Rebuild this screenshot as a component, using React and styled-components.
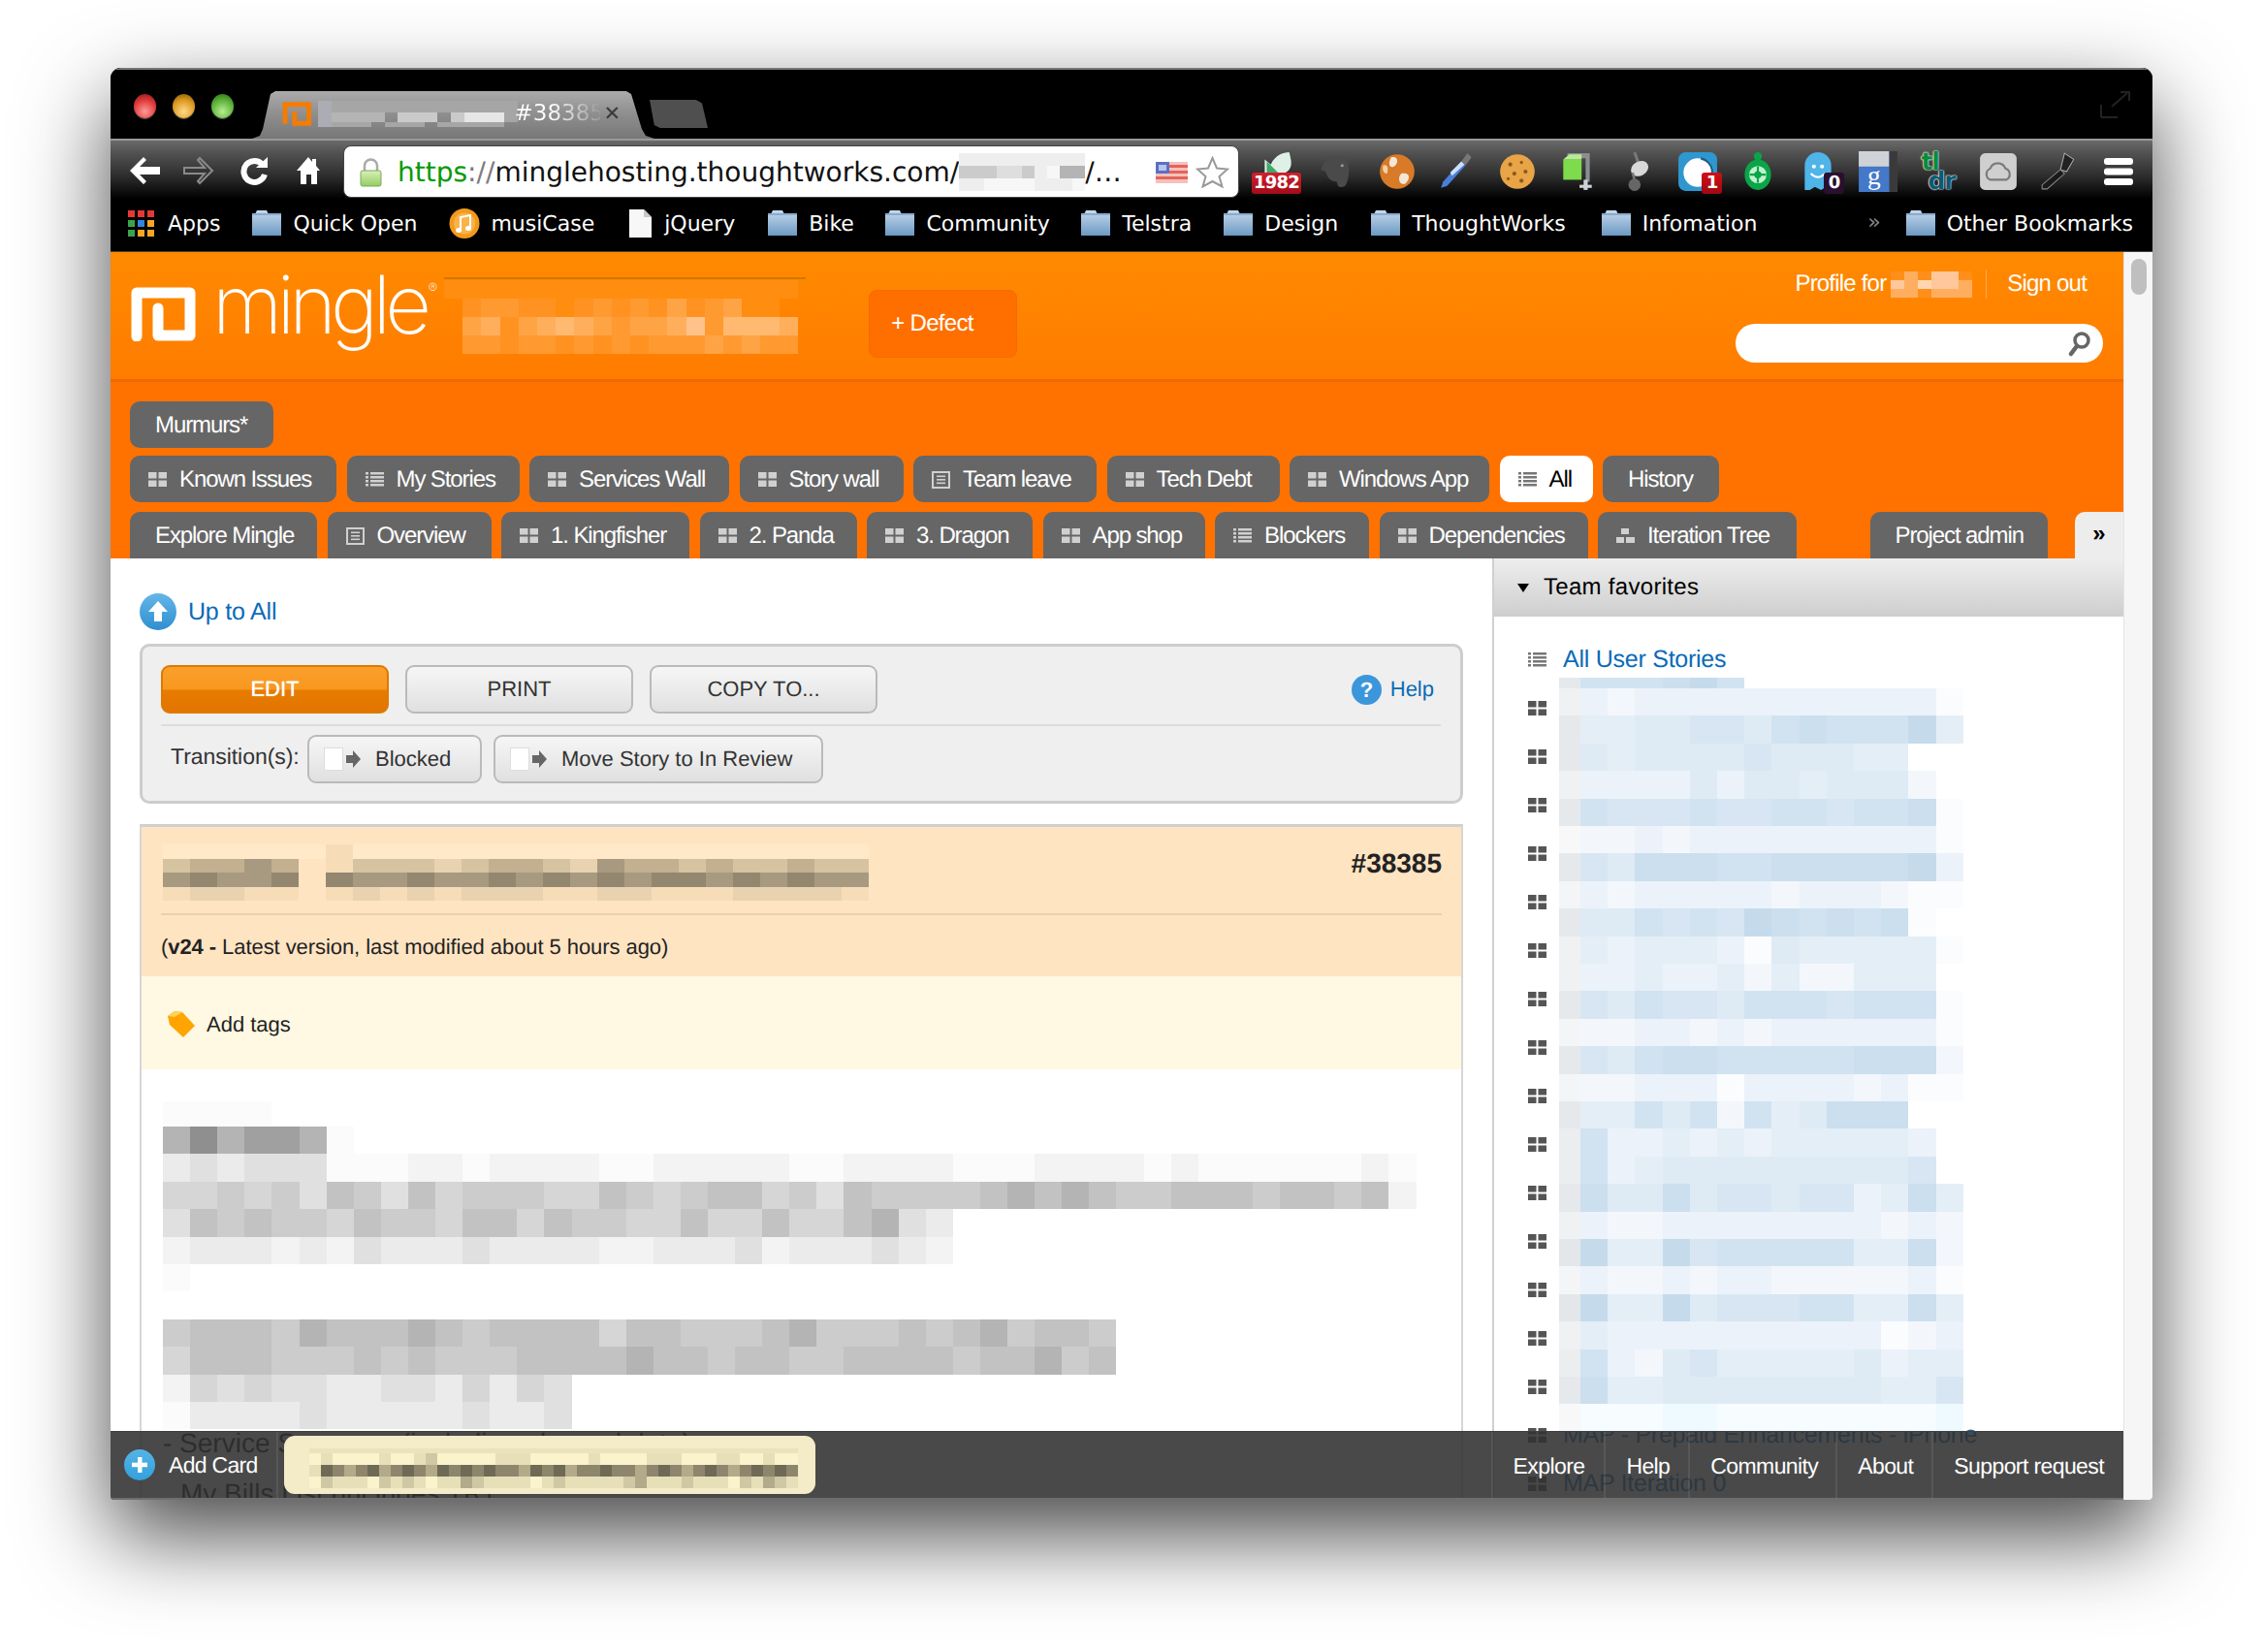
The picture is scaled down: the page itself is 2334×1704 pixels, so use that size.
import React from "react";
import styled, { createGlobalStyle } from "styled-components";

const Global = createGlobalStyle`
  html, body { margin: 0; padding: 0; background: #fff; }
  body { width: 2334px; height: 1704px; overflow: hidden; font-family: "Liberation Sans", Arial, sans-serif; text-rendering: geometricPrecision; }
`;

const Desk = styled.div`
  width: 2334px; height: 1704px; padding: 70px 114px 0 114px; box-sizing: border-box; background: #fff;
`;
const Win = styled.div`
  width: 2106px; height: 1477px; display: flex; flex-direction: column; background: #000;
  border-radius: 11px 11px 4px 4px; overflow: hidden;
  box-shadow: 0 36px 90px rgba(0,0,0,.72);
`;
const Strip = styled.div`
  height: 73px; flex: none; box-sizing: border-box; position: relative; display: flex; align-items: flex-end;
  padding: 0 22px 0 146px; background: #000; border-top: 2px solid #777; 
`;
const Lights = styled.div`
  position: absolute; left: 24px; top: 25px; display: flex; gap: 17px;
`;
const Light = styled.span`
  width: 23px; height: 25px; border-radius: 50%; display: block;
  background: radial-gradient(circle at 50% 72%, ${p => p.$hi} 0%, ${p => p.$c} 55%, ${p => p.$lo} 100%);
  box-shadow: 0 1px 1px rgba(255,255,255,.3);
`;
const Tab = styled.div`
  width: 415px; height: 49px; flex: none; box-sizing: border-box; position: relative; display: flex; align-items: center;
  padding: 0 0 3px 31px; gap: 6px; font: 23px "DejaVu Sans", sans-serif; color: #fff;
  background: linear-gradient(#ababab, #909090 45%, #777);
  clip-path: polygon(0 100%, 8px 94%, 11px 80%, 19px 6%, 24px 0, 386px 0, 391px 6%, 402px 80%, 406px 94%, 415px 100%);
`;
const TabNum = styled.span`
  width: 88px; margin-left: -9px; overflow: hidden; white-space: nowrap;
  background: linear-gradient(90deg, #fff 40%, #999 100%);
  -webkit-background-clip: text; background-clip: text; color: transparent;
`;
const TabClose = styled.span`
  color: #3a3a3a; font-size: 21px; margin-left: -2px;
`;
const NewTab = styled.div`
  width: 60px; height: 29px; margin: 0 0 11px -5px; background: #4f4f4f;
  clip-path: polygon(0 0, 80% 0, 90% 12%, 100% 100%, 18% 100%, 8% 90%);
`;
const FullIcon = styled.div`
  margin-left: auto; align-self: center; line-height: 0;
`;
const Toolbar = styled.div`
  height: 62px; flex: none; box-sizing: border-box; display: flex; align-items: center;
  background: linear-gradient(#6a6a6a 0, #555 18%, #2c2c2c 62%, #000 100%); border-top: 2px solid #999;
`;
const NavGroup = styled.div`
  width: 240px; flex: none; display: flex; align-items: center; padding-left: 19px; box-sizing: border-box; margin-top: 2px;
`;
const NavBtn = styled.span`
  display: block; line-height: 0; margin-left: ${p => p.$ml ?? 0}px;
`;
const Url = styled.div`
  width: 924px; height: 54px; margin-top: 3px; flex: none; box-sizing: border-box; background: #fff; border: 1px solid #444; border-radius: 8px;
  display: flex; align-items: center; padding: 2px 0 0 16px; font: 28px "DejaVu Sans", sans-serif; color: #111; white-space: nowrap;
`;
const Lock = styled.span`
  line-height: 0; margin-right: 16px; flex: none;
`;
const UrlG = styled.span` color: #089a08; `;
const UrlS = styled.span` color: #7c7c7c; `;
const UrlEnd = styled.span`
  margin-left: auto; display: flex; align-items: center; gap: 8px; padding-right: 9px; line-height: 0;
`;
const Exts = styled.div`
  display: flex; margin-left: 8px; align-items: center; margin-top: 3px;
`;
const Ext = styled.div`
  width: 62px; height: 44px; position: relative; display: flex; align-items: center; justify-content: center; line-height: 0;
`;
const Badge = styled.span`
  position: absolute; top: 23px; left: ${p => p.$l}px; height: 22px; min-width: 21px; padding: 0 2px; box-sizing: border-box; border-radius: 3px;
  background: ${p => p.$bg}; color: #fff; font: bold 18px/22px "DejaVu Sans", sans-serif; text-align: center; letter-spacing: -.8px;
`;
const TldrText = styled.span`
  display: flex; flex-direction: column; font: bold 25px/20px "DejaVu Sans", sans-serif; letter-spacing: -1px;
  text-shadow: 0 0 1px #fff, 0 0 1px #fff, 0 0 2px #fff;
`;
const TlA = styled.span` color: #0a8a3a; `;
const TlB = styled.span` color: #0c5a72; margin-left: 7px; `;
const Bookmarks = styled.div`
  height: 55px; flex: none; box-sizing: border-box; display: flex; align-items: center; padding: 0 0 4px 18px;
  background: #000; font: 22px "DejaVu Sans", sans-serif; color: #fff; border-bottom: 1px solid #444; white-space: nowrap;
`;
const Mark = styled.span`
  display: flex; align-items: center; gap: ${p => p.$gap ?? 11}px; margin-right: ${p => p.$mr ?? 33}px; line-height: 0;
`;
const MarkText = styled.span` line-height: 26px; margin-top: 3px; `;
const More = styled.span`
  margin-left: auto; margin-right: 25px; color: #888; font-size: 22px; line-height: 26px;
`;
const Page = styled.div`
  flex: 1; min-height: 0; display: flex; position: relative; background: #fff; overflow: hidden;
`;
const PageMain = styled.div`
  width: 2076px; flex: none; display: flex; flex-direction: column; min-height: 0;
`;
const Scroll = styled.div`
  width: 30px; flex: none; background: #f6f6f6; border-left: 1px solid #e4e4e4; box-sizing: border-box; padding: 7px 0 0 7px;
`;
const Thumb = styled.div`
  width: 16px; height: 37px; border-radius: 8px; background: #bfbfbf;
`;
const Header = styled.div`
  height: 134px; flex: none; box-sizing: border-box; display: flex; position: relative;
  padding: 36px 21px 0 21px; background: linear-gradient(#ff8a00, #ff7c00);
  border-bottom: 3px solid #ec6a00;
`;
const Logo = styled.div`
  display: flex; align-items: flex-start; width: 331px; flex: none;
`;
const LogoMark = styled.span` line-height: 0; `;
const LogoWord = styled.span`
  color: #fff; font: 250 83px/74px "Inter", sans-serif; letter-spacing: -5.8px; margin: -18px 0 0 16px; position: relative;
`;
const LogoR = styled.span`
  position: absolute; right: -12px; top: 13px; font-size: 14px; line-height: 14px; letter-spacing: 0;
`;
const Project = styled.div`
  width: 430px; flex: none; margin: -10px 0 0 0; line-height: 0;
`;
const ProjectShift = styled.div`
  margin-left: -8px;
`;
const ProjectLine = styled.div`
  width: 373px; height: 2px; background: #d27600; margin-bottom: 1px;
`;
const Defect = styled.button`
  width: 153px; height: 70px; margin: 3px 0 0 0; border: 1px solid #f76a00; border-radius: 8px; background: #ff6f00; color: #fff;
  font: 24px "Liberation Sans", sans-serif; letter-spacing: -.7px; padding: 0 22px 0 0; text-rendering: geometricPrecision;
`;
const HeadRight = styled.div`
  margin-left: auto; display: flex; flex-direction: column; align-items: flex-end; margin-top: -18px;
`;
const ProfileRow = styled.div`
  display: flex; align-items: center; color: #fff; font: 24px "Liberation Sans", sans-serif; letter-spacing: -.8px; height: 30px; padding-right: 17px;
`;
const ProfileMos = styled.span` margin: 0 0 0 5px; line-height: 0; `;
const ProfileSep = styled.span`
  width: 1px; height: 30px; background: rgba(255,255,255,.3); margin: 0 21px 0 14px;
`;
const Search = styled.div`
  width: 379px; height: 40px; margin-top: 26px; background: #fff; border-radius: 20px; display: flex; align-items: center; justify-content: flex-end; padding-right: 12px; box-sizing: border-box; line-height: 0;
`;
const Nav = styled.div`
  flex: none; height: 182px; box-sizing: border-box; padding: 20px 0 0 20px; background: #ff7200; display: flex; flex-direction: column; position: relative;
`;
const TabRow = styled.div`
  display: flex; margin-top: ${p => p.$mt ?? 0}px; gap: 10.5px;
`;
const NavTab = styled.a`
  height: 48px; flex: none; box-sizing: border-box; width: ${p => p.$w}px; padding: 1px 0 0 ${p => p.$icon ? 19 : 26}px; display: flex; align-items: center; gap: 13px;
  background: ${p => p.$on ? "#fff" : "#666"}; color: ${p => p.$on ? "#000" : "#fff"};
  border-radius: ${p => p.$flat ? "10px 10px 0 0" : "10px"};
  margin-left: ${p => p.$ml ?? 0}px;
  font: 24px "Liberation Sans", sans-serif; letter-spacing: -1.1px; white-space: nowrap;
`;
const MoreTab = styled.div`
  position: absolute; right: 0; bottom: 0; width: 50px; height: 48px; background: #ededed; border-radius: 10px 0 0 0; color: #000;
  display: flex; align-items: center; justify-content: center; font: bold 24px "Liberation Sans", sans-serif; padding-bottom: 2px; box-sizing: border-box;
`;
const Body = styled.div`
  flex: 1; min-height: 0; display: flex; overflow: hidden;
`;
const MainCol = styled.div`
  width: 1427px; flex: none; box-sizing: border-box; border-right: 2px solid #d0d0d0; padding: 36px 30px 0 30px; color: #222;
`;
const UpLink = styled.a`
  display: flex; align-items: center; gap: 12px; height: 38px; color: #0a6ab8; font-size: 25px; letter-spacing: -.2px; line-height: 0;
`;
const Box = styled.div`
  margin-top: 14px; height: 165px; box-sizing: border-box; background: #efefef; border: 3px solid #cdcdcd; border-radius: 10px; padding: 19px 20px 0 19px;
`;
const BtnRow = styled.div`
  display: flex; gap: 17px; align-items: center; height: 50px; 
`;
const Act = styled.button`
  width: 235px; height: 50px; box-sizing: border-box; border-radius: 9px; font: 22px "Liberation Sans", sans-serif; padding: 0; text-rendering: geometricPrecision;
  color: ${p => p.$primary ? "#fff" : "#333"};
  text-shadow: ${p => p.$primary ? "0 0 1px #fff" : "none"};
  border: 2px solid ${p => p.$primary ? "#dd7a00" : "#bababa"};
  background: ${p => p.$primary ? "linear-gradient(#fb9f2b 0, #f89820 50%, #e87b00 52%, #e27500 100%)" : "linear-gradient(#f6f6f6, #e0e0e0)"};
`;
const Help = styled.a`
  margin-left: auto; display: flex; align-items: center; gap: 9px; color: #0a6ab8; font-size: 22px; line-height: 0; padding-right: 7px;
`;
const Rule = styled.div`
  height: 2px; background: #dcdcdc; margin-top: 11px; 
`;
const TransRow = styled.div`
  display: flex; align-items: center; height: 50px; margin-top: 9px;
`;
const TransLabel = styled.span`
  font-size: 23px; color: #333; margin: -5px 12px 0 10px; letter-spacing: -.05px; width: 129px; white-space: nowrap;
`;
const Trans = styled.button`
  width: ${p => p.$w}px; height: 50px; margin-right: 12px; box-sizing: border-box; border: 2px solid #bababa; border-radius: 9px; background: linear-gradient(#f6f6f6, #e0e0e0);
  font: 22px "Liberation Sans", sans-serif; color: #333; display: flex; align-items: center; gap: 15px; padding: 0 0 0 15px; text-rendering: geometricPrecision;
`;
const TransIcon = styled.span` line-height: 0; `;
const Card = styled.div`
  margin-top: 21px; border-left: 2px solid #d6d6d6; border-right: 2px solid #d6d6d6; border-top: 3px solid #d0d0d0; height: 800px;
`;
const CardHead = styled.div`
  background: #ffe4c2; height: 154px; box-sizing: border-box; padding: 18px 20px 0 20px; color: #222;
`;
const TitleRow = styled.div`
  display: flex; justify-content: space-between; align-items: flex-start; height: 71px; line-height: 0; padding-left: 2px;
`;
const CardNum = styled.span`
  font: bold 28px/38px "Liberation Sans", sans-serif; color: #222; margin-top: 1px;
`;
const HeadRule = styled.div` height: 2px; background: #eccfae; `;
const Version = styled.div` font-size: 22px; padding-top: 20px; line-height: 26px; letter-spacing: -.07px; `;
const TagBar = styled.div`
  background: #fff8e2; height: 96px; box-sizing: border-box; display: flex; align-items: center; padding: 3px 0 0 26px; gap: 11px; font-size: 22px; line-height: 0;
`;
const CardBody = styled.div`
  padding: 33px 0 0 22px; color: #111; line-height: 0;
`;
const Line = styled.div`
  font-size: 28px; line-height: 28px; color: #111; margin-left: ${p => p.$ml ?? 0}px; margin-top: ${p => p.$mt ?? 0}px; white-space: nowrap;
`;
const Side = styled.div`
  flex: 1; min-width: 0;
`;
const SideHead = styled.div`
  height: 60px; display: flex; align-items: center; gap: 15px; padding-left: 24px; box-sizing: border-box; font-size: 24px; letter-spacing: .3px; color: #000;
  background: linear-gradient(#eeeeee, #cecece);
`;
const Tri = styled.span`
  width: 0; height: 0; border-left: 6.5px solid transparent; border-right: 6.5px solid transparent; border-top: 9px solid #000; display: block;
`;
const SideList = styled.div`
  position: relative; padding: 19px 0 0 35px; 
`;
const SideRow = styled.div`
  height: 50px; display: flex; align-items: center; gap: 17px; color: #0a6ab8; font-size: 25px; letter-spacing: -.25px; white-space: nowrap; line-height: 0;
`;
const SideText = styled.span` line-height: 30px; `;
const SideMos = styled.div`
  position: absolute; left: 67px; top: 63px; line-height: 0;
`;
const Bar = styled.div`
  position: absolute; left: 0; right: 30px; bottom: 0; height: 71px; background: rgba(50,50,50,.887); border-top: 1px solid #3e3e3e; border-bottom: 2px solid #6e6e6e;
  box-sizing: border-box; display: flex; align-items: center; color: #fff; font: 23px "Liberation Sans", sans-serif; letter-spacing: -.7px;
`;
const AddCard = styled.a`
  width: 173px; height: 100%; flex: none; display: flex; align-items: center; gap: 14px; box-sizing: border-box; padding-left: 14px; border-right: 2px solid rgba(255,255,255,.08); line-height: 0;
`;
const AddText = styled.span` line-height: 26px; white-space: nowrap; `;
const Bubble = styled.div`
  margin-left: 6px; width: 548px; height: 60px; box-sizing: border-box; border-radius: 11px; background: #f4ebc8; padding: 13px 0 0 26px; line-height: 0;
`;
const FootLinks = styled.nav`
  margin-left: auto; height: 100%; display: flex; letter-spacing: -.6px;
`;
const FootLink = styled.a`
  height: 100%; box-sizing: border-box; display: flex; align-items: center; padding: 2px ${p => p.$r ?? 20}px 0 21px; border-left: 2px solid rgba(255,255,255,.08);
`;
const MosSvg = styled.svg`
  display: inline-block; flex: none; shape-rendering: crispEdges;
`;

function Mosaic({ rows, pal, w, h, firstW, heights }) {
  const fw = firstW ?? w;
  const hs = rows.map((_, j) => (heights && heights[j] != null ? heights[j] : h));
  const maxLen = Math.max(...rows.map(r => r.length));
  const W = fw + (maxLen - 1) * w;
  const H = hs.reduce((a, b) => a + b, 0);
  let y = 0;
  return (
    <MosSvg width={W} height={H} viewBox={`0 0 ${W} ${H}`}>
      {rows.map((r, j) => {
        const yy = y;
        y += hs[j];
        return [...r].map((c, i) =>
          pal[c] ? (
            <rect key={`${j}-${i}`} x={i === 0 ? 0 : fw + (i - 1) * w} y={yy} width={i === 0 ? fw : w} height={hs[j]} fill={pal[c]} />
          ) : null
        );
      })}
    </MosSvg>
  );
}

const blue = {
  "1": "#fbfcfe", "2": "#f3f7fc", "3": "#ebf2fa", "4": "#e4eef7", "5": "#deebf5", "6": "#d7e6f2", "7": "#d1e3f1", "8": "#cbdfee", "9": "#c5dbec",
  a: "#f8f8f9", b: "#f4f5f6", c: "#f0f1f3", d: "#ebedef", e: "#e6e9ec", f: "#e3e7ea",
  x: "#eefaff", w: "#f6fcff",
};
const sideRows = [
  "e777897",
  "c32333333333331",
  "e44556657877794",
  "e545555655544..",
  "c3333535545552.",
  "e76667667767781",
  "a22323333333331",
  "e65888778888893",
  "b32333332333211",
  "e5576769878781.",
  "c43444315444441",
  "c3343342422444.",
  "e65766577767771",
  "b22332323333331",
  "e65788777778882",
  "b22333133332311",
  "e447572745888..",
  "d7334343444443.",
  "d7345555555556.",
  "e85585665663484",
  "c32233333333232",
  "f94496777774482",
  "b32232332222231",
  "f94495666774484",
  "c43333333333123",
  "d73256444445344",
  "e84455555555446",
  "awwwxxwwwwwwwwx",
];
const gray = {
  "1": "#fbfbfb", "2": "#f3f3f3", "3": "#ebebeb", "4": "#e0e0e0", "5": "#d6d6d6", "6": "#cccccc", "7": "#c2c2c2", "8": "#b4b4b4", "9": "#a0a0a0", a: "#8f8f8f",
};
const mainRows = [
  "1111.",
  "8a89981",
  "3434441112212222112222211222211122221211111121",
  "5565647647566655765677564766667878766777677672",
  "47676657665775766557557557843",
  "23332324333433332233342333432",
  "1",
  "",
  "67776877787677775776667866676786776",
  "57776667676667777877677667777677867",
  "254544334435354",
  "133334333334334",
];
const orange = { a: "#ff8d10", b: "#ff9220", c: "#ff9a30", d: "#ffa445", e: "#ffae5c", f: "#ffb970", g: "#ffc28a" };
const projRows = [
  "aaaaaaaaaaaaaaaaaaa",
  ".bccbbabcbcbdbcdaa.",
  ".debdefedcddegcfffe",
  ".ccbccbcbcbcccdcdcc",
];
const peach = { a: "#ffe9c8", b: "#f7dcb8", c: "#e8d2b0", d: "#d6c3a0", e: "#c2b090", f: "#a89a80", g: "#948770" };
const titleRows = [
  "aaaaaabaaaaaaaaaaaaaaaaaaa",
  "deefe.bdddcdeedcfeededdedd",
  "fgffg.gffgffgfgfgfggfgfgff",
  "bccbb.bcbcbcccbbccbbbccccb",
];
const cream = { a: "#ece2bb", b: "#fbf3cc", c: "#e6dfb8", d: "#d0c8a4", e: "#b3aa8a", f: "#8e866c", g: "#6f6a55" };
const bubbleRows = [
  "aaaaaaaaaaaaaaaaaaaaaaaaaaaaaaaaaaaaaaaaaa",
  "bcbbbbcbbcdbbbbbcccbbbbbcbbbbcccbbbccbbcbb",
  "cgfefgefgfegfgfgffegfgeffgffefgfefgfefgfgf",
  "bdcccbdcdcbccedccccbcdcccccdecccdcccbdcedc",
];
const tabPal = { a: "#a6a6a6", b: "#acacb4", c: "#b4b4b4", d: "#cacaca", e: "#e6e6e6", f: "#f2f2f2" };
const tabRows = ["baaaaaaaaaaaaaa", "bcccc.ddd.deeea", "baaa.aaa.aaaaa."];
const urlPal = { a: "#f7f7f7", b: "#eeeeee", c: "#dedede", d: "#cbcbcb", e: "#b4b4b4" };
const urlRows = ["bbbbbbbbbb", "dddccdbaee", "bbaaaabbba"];
const profPal = { a: "#ff8f1a", b: "#ffae60", c: "#ffc79a", d: "#ffd6b0" };
const profRows = ["abacca", "cbdccb", "bbabbb"];

const IconGrid = ({ c = "#d0d0d0", s = 19, h = 15 }) => (
  <svg width={s} height={h} viewBox="0 0 19 15"><g fill={c}><rect width="8.5" height="6.5" /><rect x="10.5" width="8.5" height="6.5" /><rect y="8.5" width="8.5" height="6.5" /><rect x="10.5" y="8.5" width="8.5" height="6.5" /></g></svg>
);
const IconList = ({ c = "#d0d0d0" }) => (
  <svg width="19" height="15" viewBox="0 0 19 15"><g fill={c}><rect width="3" height="2.5" /><rect x="5" width="14" height="2.5" /><rect y="4" width="3" height="2.5" /><rect x="5" y="4" width="14" height="2.5" /><rect y="8" width="3" height="2.5" /><rect x="5" y="8" width="14" height="2.5" /><rect y="12" width="3" height="2.5" /><rect x="5" y="12" width="14" height="2.5" /></g></svg>
);
const IconPage = ({ c = "#d0d0d0" }) => (
  <svg width="19" height="18" viewBox="0 0 19 18"><rect x="1" y="1" width="17" height="16" fill="none" stroke={c} strokeWidth="2" /><g fill={c}><rect x="5" y="4.5" width="9" height="1.6" /><rect x="5" y="8" width="9" height="1.6" /><rect x="5" y="11.5" width="9" height="1.6" /></g></svg>
);
const IconTree = ({ c = "#d0d0d0" }) => (
  <svg width="19" height="15" viewBox="0 0 19 15"><g fill={c}><rect x="5" width="8" height="6" /><rect y="9" width="8" height="6" /><rect x="10" y="9" width="9" height="6" /></g></svg>
);
const tabIcons = { grid: IconGrid, list: IconList, page: IconPage, tree: IconTree };

const Folder = () => (
  <svg width="32" height="28" viewBox="0 0 32 28">
    <defs><linearGradient id="fg" x1="0" y1="0" x2="0" y2="1"><stop offset="0" stopColor="#c6d9ec" /><stop offset="1" stopColor="#6c99c3" /></linearGradient></defs>
    <path d="M1 5 V27 H31 V5 H18 L16 1 H6 L4 5 Z" fill="url(#fg)" />
    <rect x="1" y="4" width="30" height="2" fill="#88abcd" />
  </svg>
);
const AppsIcon = () => (
  <svg width="27" height="27" viewBox="0 0 27 27">
    {[["#e53935", "#e53935", "#e53935"], ["#3da34a", "#2f86e0", "#f5a623"], ["#3da34a", "#f5a623", "#f5a623"]].flatMap((r, j) => r.map((c, i) => <rect key={`${i}${j}`} x={i * 10} y={j * 10} width="7" height="7" fill={c} />))}
  </svg>
);
const MusicIcon = () => (
  <svg width="32" height="33" viewBox="0 0 32 33">
    <circle cx="16" cy="16.5" r="15.5" fill="#f39a1c" /><circle cx="16" cy="16.5" r="11" fill="#f7b44a" />
    <path d="M12 23 V10 L22 8 V21" fill="none" stroke="#fff" strokeWidth="2" /><ellipse cx="10" cy="23.5" rx="3" ry="2.5" fill="#fff" /><ellipse cx="20" cy="21.5" rx="3" ry="2.5" fill="#fff" />
  </svg>
);
const DocIcon = () => (
  <svg width="23" height="29" viewBox="0 0 23 29"><path d="M0 0 H15 L23 8 V29 H0 Z" fill="#f7f7f7" /><path d="M15 0 L23 8 H15 Z" fill="#c9c9c9" /></svg>
);

const Back = () => (
  <svg width="33" height="30" viewBox="0 0 33 30"><path d="M15 1 L1 15 L15 29 L18 26 L11 19 H32 V11 H11 L18 4 Z" fill="#fff" /></svg>
);
const Fwd = () => (
  <svg width="33" height="30" viewBox="0 0 33 30"><path d="M18 2 L31 15 L18 28 L16 26 L23 18 H2 V12 H23 L16 4 Z" fill="none" stroke="#8a8a8a" strokeWidth="2" /></svg>
);
const Reload = () => (
  <svg width="30" height="30" viewBox="0 0 30 30"><path d="M24 9 A11 11 0 1 0 26 19" fill="none" stroke="#fff" strokeWidth="6" /><path d="M17 12 L29 12 L29 1 Z" fill="#fff" /></svg>
);
const Home = () => (
  <svg width="26" height="30" viewBox="0 0 26 30"><path d="M13 1 L1 15 H5 V29 H11 V19 H16 V29 H22 V15 H25 L21 10 V3 H17 V6 Z" fill="#fff" /></svg>
);
const LockIcon = () => (
  <svg width="23" height="30" viewBox="0 0 23 30">
    <defs><linearGradient id="lg" x1="0" y1="0" x2="0" y2="1"><stop offset="0" stopColor="#d9f0b8" /><stop offset="1" stopColor="#93cc62" /></linearGradient></defs>
    <path d="M5 13 V8 A6.5 6.5 0 0 1 18 8 V13" fill="none" stroke="#aaa" strokeWidth="2.5" /><rect x="1" y="13" width="21" height="16" rx="2" fill="url(#lg)" stroke="#7fa85a" />
  </svg>
);
const FlagIcon = () => (
  <svg width="33" height="22" viewBox="0 0 33 22"><rect width="33" height="22" fill="#f3c1bb" />{[3, 9, 15].map(y => <rect key={y} y={y} width="33" height="3" fill="#e4635a" />)}<rect width="14" height="12" fill="#5b6fc4" /><rect x="3" y="3" width="8" height="6" fill="#b8c4ee" /></svg>
);
const StarIcon = () => (
  <svg width="35" height="33" viewBox="0 0 35 33"><path d="M17.5 2 L22 12.5 L33 13.5 L24.5 21 L27.5 31.5 L17.5 26 L7.5 31.5 L10.5 21 L2 13.5 L13 12.5 Z" fill="#fff" stroke="#9a9a9a" strokeWidth="2" /></svg>
);
const I = ({ children }) => <svg width="42" height="42" viewBox="0 0 40 40">{children}</svg>;
const E1 = () => <I><path d="M8 24 V8 L14 13 C18 4 26 1 32 1 C34 8 36 16 30 20 C26 23 22 24 8 24Z" fill="#dff0e6" /><path d="M10 24 V10 L22 22Z" fill="#3fa86a" /></I>;
const E2 = () => <I><path d="M8 10 C10 4 26 2 30 10 C33 16 32 28 28 34 C24 36 20 36 20 30 C14 30 10 26 9 20 L4 18Z" fill="#4a4a4a" /><circle cx="25" cy="14" r="1.5" fill="#999" /></I>;
const E3 = () => <I><circle cx="20" cy="20" r="17" fill="#d87a28" /><path d="M14 6 C20 4 22 10 18 14 C14 18 10 14 14 6Z M24 22 C32 20 34 26 28 32 C22 34 20 26 24 22Z" fill="#f5e7d8" /><path d="M6 14 C10 12 12 16 10 22 C8 22 5 20 6 14Z" fill="#f0d0a8" /></I>;
const E4 = () => <I><path d="M30 2 L34 6 L28 14 L24 10Z" fill="#777" /><path d="M24 10 L28 14 L10 34 L4 36 L6 30Z" fill="#4a7fd8" /><path d="M24 10 L27 13 L15 24 L13 21Z" fill="#cfe0ff" /></I>;
const E5 = () => <I><circle cx="20" cy="20" r="17" fill="#e8a446" /><g fill="#8a5a1e"><circle cx="13" cy="13" r="2" /><circle cx="24" cy="11" r="1.6" /><circle cx="28" cy="20" r="2" /><circle cx="17" cy="22" r="2" /><circle cx="11" cy="27" r="1.5" /><circle cx="24" cy="29" r="2" /></g></I>;
const E6 = () => <I><path d="M10 2 H32 V30 H28 V7 H10Z" fill="#8b8f92" /><rect x="6" y="8" width="18" height="20" fill="#7ddb4c" /><path d="M6 8 L12 3 H24 V8Z" fill="#b6ef92" /><rect x="26" y="28" width="4" height="10" fill="#cfd3d6" /><rect x="22" y="33" width="12" height="3" fill="#cfd3d6" /></I>;
const E7 = () => <I><path d="M17 1 L21 12" stroke="#777" strokeWidth="3" /><ellipse cx="22" cy="17" rx="9" ry="7" fill="#d8d8d8" transform="rotate(-30 22 17)" /><path d="M15 21 L17 28" stroke="#777" strokeWidth="2.5" /><circle cx="17" cy="33" r="6" fill="#666" /></I>;
const E8 = () => <I><rect x="1" y="1" width="38" height="38" rx="7" fill="#2f97cf" /><circle cx="20" cy="21" r="14" fill="#fff" /><path d="M23 7 A14 14 0 0 1 27 33" fill="none" stroke="#1c5f86" strokeWidth="2" /></I>;
const E9 = () => <I><ellipse cx="20" cy="23" rx="13" ry="15" fill="#0aa548" /><circle cx="20" cy="5" r="4" fill="#0aa548" /><circle cx="20" cy="23" r="8.5" fill="#bff3cd" /><path d="M12 23 H28 M20 15 V31" stroke="#0aa548" strokeWidth="2" /><circle cx="20" cy="23" r="3.5" fill="#0aa548" /></I>;
const E10 = () => <I><path d="M7 38 V14 A13 13 0 0 1 33 14 V38 L28 35 L23 38 L17 35 L12 38Z" fill="#4fb4e8" /><circle cx="16" cy="15" r="2" fill="#fff" /><circle cx="24" cy="15" r="2" fill="#fff" /><path d="M13 22 Q20 29 27 22" fill="none" stroke="#fff" strokeWidth="2" /></I>;
const E11 = () => (
  <I>
    <rect x="1" width="38" height="40" fill="#4478c8" /><rect x="1" width="30" height="15" fill="#cfd2d6" /><rect x="31" width="8" height="40" fill="#3a3a3a" />
    <text x="16" y="32" fontSize="26" fill="#fff" fontFamily="Liberation Serif, serif" textAnchor="middle">g</text>
  </I>
);
const E13 = () => <I><rect x="2" y="2" width="36" height="36" rx="5" fill="#cfcfcf" /><path d="M12 28 A6 6 0 0 1 12 17 A8 8 0 0 1 27 17 A6 6 0 0 1 28 28 Z" fill="none" stroke="#7a7a7a" strokeWidth="2" /></I>;
const E14 = () => <I><path d="M26 2 L35 8 L28 20 L22 18Z" fill="#222" stroke="#aaa" /><path d="M22 18 L26 22 L9 37 H4 V33Z" fill="#1a1a1a" stroke="#888" /></I>;
const Menu = () => <svg width="32" height="30" viewBox="0 0 32 30"><g fill="#fff"><rect x="1" y="1" width="30" height="7" rx="3" /><rect x="1" y="11.5" width="30" height="7" rx="3" /><rect x="1" y="22" width="30" height="7" rx="3" /></g></svg>;

const MingleMark = () => (
  <svg width="68" height="56" viewBox="0 0 68 56">
    <path d="M6 51 V6 H61 V50 H28 V22" fill="none" stroke="#fff" strokeWidth="11" strokeLinejoin="round" strokeLinecap="round" />
  </svg>
);
const Favicon = () => (
  <svg width="31" height="25" viewBox="0 0 68 56"><path d="M6 51 V6 H61 V50 H28 V22" fill="none" stroke="#f57c00" strokeWidth="11" /></svg>
);
const SearchIcon = () => (
  <svg width="24" height="28" viewBox="0 0 24 28"><circle cx="14" cy="11" r="7" fill="none" stroke="#666" strokeWidth="3.5" /><path d="M9 17 L3 25" stroke="#666" strokeWidth="4.5" strokeLinecap="round" /></svg>
);
const UpIcon = () => (
  <svg width="38" height="38" viewBox="0 0 38 38">
    <defs><linearGradient id="ub" x1="0" y1="0" x2="0" y2="1"><stop offset="0" stopColor="#64b6e8" /><stop offset="1" stopColor="#2f8fd0" /></linearGradient></defs>
    <circle cx="19" cy="19" r="19" fill="url(#ub)" /><path d="M19 8 L29 19 H23 V29 H15 V19 H9 Z" fill="#fff" />
  </svg>
);
const HelpIcon = () => (
  <svg width="31" height="31" viewBox="0 0 31 31">
    <circle cx="15.5" cy="15.5" r="15.5" fill="#3c96dc" />
    <text x="15.5" y="23" fontSize="22" fontWeight="bold" fill="#fff" fontFamily="Liberation Sans, sans-serif" textAnchor="middle">?</text>
  </svg>
);
const TransArrow = () => (
  <svg width="38" height="24" viewBox="0 0 38 24"><rect x="0.5" y="0.5" width="19" height="23" fill="#fff" stroke="#ddd" /><path d="M23 8 H30 V3 L38 12 L30 21 V16 H23Z" fill="#666" /></svg>
);
const TagIcon = () => (
  <svg width="30" height="29" viewBox="0 0 30 29"><path d="M1 6 L8 1 L16 2 L29 16 L17 28 L3 15Z" fill="#ffa400" /><path d="M1 6 L8 1 L16 2 L8 7Z" fill="#ffd25a" /></svg>
);
const PlusIcon = () => (
  <svg width="32" height="32" viewBox="0 0 32 32">
    <defs><linearGradient id="pb" x1="0" y1="0" x2="0" y2="1"><stop offset="0" stopColor="#56b4e6" /><stop offset="1" stopColor="#33a0dc" /></linearGradient></defs>
    <circle cx="16" cy="16" r="16" fill="url(#pb)" /><rect x="14" y="8" width="4.5" height="16" fill="#fff" /><rect x="8" y="13.7" width="16" height="4.5" fill="#fff" />
  </svg>
);
const FullArrow = () => (
  <svg width="34" height="30" viewBox="0 0 34 30"><path d="M3 28 H20 M3 28 V15 M14 17 L30 3 M23 2 H32 V11" fill="none" stroke="#222" strokeWidth="2" /></svg>
);

const row1 = [["grid", "Known Issues", 213], ["list", "My Stories", 178], ["grid", "Services Wall", 206], ["grid", "Story wall", 169], ["page", "Team leave", 189], ["grid", "Tech Debt", 178], ["grid", "Windows App", 206], ["list", "All", 96, true], [null, "History", 120]];
const row2 = [[null, "Explore Mingle", 193], ["page", "Overview", 169], ["grid", "1. Kingfisher", 194], ["grid", "2. Panda", 162], ["grid", "3. Dragon", 171], ["grid", "App shop", 167], ["list", "Blockers", 159], ["grid", "Dependencies", 215], ["tree", "Iteration Tree", 205]];

const renderTab = ([ic, label, w, on], flat) => {
  const Ic = ic ? tabIcons[ic] : null;
  return (
    <NavTab key={label} $w={w} $icon={!!ic} $on={on} $flat={flat}>
      {Ic && <Ic c={on ? "#777" : "#d0d0d0"} />}
      {label}
    </NavTab>
  );
};

const folders1 = [["Bike", 31.5], ["Community", 31.5], ["Telstra", 32], ["Design", 33], ["ThoughtWorks", 36]];

export default function App() {
  return (
    <>
      <Global />
      <Desk>
        <Win>
          <Strip>
            <Lights>
              <Light $c="#e03a3a" $hi="#ff9a9a" $lo="#7d1414" />
              <Light $c="#dd9a20" $hi="#ffd98a" $lo="#7a4c08" />
              <Light $c="#5cb23a" $hi="#b6ee90" $lo="#2a6a12" />
            </Lights>
            <Tab>
              <Favicon />
              <Mosaic rows={tabRows} pal={tabPal} w={13.7} h={12} heights={[12, 10, 5]} />
              <TabNum>#38385</TabNum>
              <TabClose>✕</TabClose>
            </Tab>
            <NewTab />
            <FullIcon><FullArrow /></FullIcon>
          </Strip>
          <Toolbar>
            <NavGroup>
              <NavBtn><Back /></NavBtn>
              <NavBtn $ml={22}><Fwd /></NavBtn>
              <NavBtn $ml={26}><Reload /></NavBtn>
              <NavBtn $ml={28}><Home /></NavBtn>
            </NavGroup>
            <Url>
              <Lock><LockIcon /></Lock>
              <UrlG>https</UrlG><UrlS>://</UrlS>minglehosting.thoughtworks.com/
              <Mosaic rows={urlRows} pal={urlPal} w={13} h={13} />
              /…
              <UrlEnd><FlagIcon /><StarIcon /></UrlEnd>
            </Url>
            <Exts>
              <Ext><E1 /><Badge $l={5} $bg="linear-gradient(#d01f2e,#a40c18)">1982</Badge></Ext>
              <Ext><E2 /></Ext>
              <Ext><E3 /></Ext>
              <Ext><E4 /></Ext>
              <Ext><E5 /></Ext>
              <Ext><E6 /></Ext>
              <Ext><E7 /></Ext>
              <Ext><E8 /><Badge $l={35} $bg="linear-gradient(#d0101a,#a00810)">1</Badge></Ext>
              <Ext><E9 /></Ext>
              <Ext><E10 /><Badge $l={37} $bg="#2a0f2e">0</Badge></Ext>
              <Ext><E11 /></Ext>
              <Ext><TldrText><TlA>tl</TlA><TlB>dr</TlB></TldrText></Ext>
              <Ext><E13 /></Ext>
              <Ext><E14 /></Ext>
              <Ext><Menu /></Ext>
            </Exts>
          </Toolbar>
          <Bookmarks>
            <Mark $mr={32} $gap={14}><AppsIcon /><MarkText>Apps</MarkText></Mark>
            <Mark><Folder /><MarkText>Quick Open</MarkText></Mark>
            <Mark $gap={11} $mr={36}><MusicIcon /><MarkText>musiCase</MarkText></Mark>
            <Mark $gap={13} $mr={33}><DocIcon /><MarkText>jQuery</MarkText></Mark>
            {folders1.map(([n, mr]) => <Mark key={n} $mr={mr}><Folder /><MarkText>{n}</MarkText></Mark>)}
            <Mark><Folder /><MarkText>Infomation</MarkText></Mark>
            <More>»</More>
            <Mark $mr={20}><Folder /><MarkText>Other Bookmarks</MarkText></Mark>
          </Bookmarks>
          <Page>
            <PageMain>
              <Header>
                <Logo>
                  <LogoMark><MingleMark /></LogoMark>
                  <LogoWord>mingle<LogoR>®</LogoR></LogoWord>
                </Logo>
                <Project>
                  <ProjectShift>
                    <ProjectLine />
                    <Mosaic rows={projRows} pal={orange} w={19.2} h={19} />
                  </ProjectShift>
                </Project>
                <Defect>+ Defect</Defect>
                <HeadRight>
                  <ProfileRow>
                    Profile for
                    <ProfileMos><Mosaic rows={profRows} pal={profPal} w={14} h={9} /></ProfileMos>
                    <ProfileSep />
                    Sign out
                  </ProfileRow>
                  <Search><SearchIcon /></Search>
                </HeadRight>
              </Header>
              <Nav>
                <TabRow><NavTab $w={148}>Murmurs*</NavTab></TabRow>
                <TabRow $mt={8}>{row1.map(t => renderTab(t, false))}</TabRow>
                <TabRow $mt={10}>
                  {row2.map(t => renderTab(t, true))}
                  <NavTab $w={183} $ml={65} $flat>Project admin</NavTab>
                </TabRow>
                <MoreTab>»</MoreTab>
              </Nav>
              <Body>
                <MainCol>
                  <UpLink><UpIcon />Up to All</UpLink>
                  <Box>
                    <BtnRow>
                      <Act $primary>EDIT</Act>
                      <Act>PRINT</Act>
                      <Act>COPY TO...</Act>
                      <Help><HelpIcon />Help</Help>
                    </BtnRow>
                    <Rule />
                    <TransRow>
                      <TransLabel>Transition(s):</TransLabel>
                      <Trans $w={180}><TransIcon><TransArrow /></TransIcon>Blocked</Trans>
                      <Trans $w={340}><TransIcon><TransArrow /></TransIcon>Move Story to In Review</Trans>
                    </TransRow>
                  </Box>
                  <Card>
                    <CardHead>
                      <TitleRow>
                        <Mosaic rows={titleRows} pal={peach} w={28} h={14.5} />
                        <CardNum>#38385</CardNum>
                      </TitleRow>
                      <HeadRule />
                      <Version>(<b>v24 -</b> Latest version, last modified about 5 hours ago)</Version>
                    </CardHead>
                    <TagBar><TagIcon />Add tags</TagBar>
                    <CardBody>
                      <Mosaic rows={mainRows} pal={gray} w={28.1} h={28.4} heights={[26]} />
                      <Line $mt={1}>- Service Summary (including planned data)</Line>
                      <Line $ml={18} $mt={24}>My Bills List (includes TR)</Line>
                    </CardBody>
                  </Card>
                </MainCol>
                <Side>
                  <SideHead><Tri />Team favorites</SideHead>
                  <SideList>
                    <SideRow><IconList c="#777" /><SideText>All User Stories</SideText></SideRow>
                    {Array.from({ length: 15 }).map((_, i) => <SideRow key={i}><IconGrid c="#555" /></SideRow>)}
                    <SideRow><IconGrid c="#555" /><SideText>MAP - Prepaid Enhancements - iPhone</SideText></SideRow>
                    <SideRow><IconGrid c="#555" /><SideText>MAP Iteration 0</SideText></SideRow>
                    <SideMos><Mosaic rows={sideRows} pal={blue} w={28.2} h={28.4} firstW={22} heights={[11]} /></SideMos>
                  </SideList>
                </Side>
              </Body>
            </PageMain>
            <Scroll><Thumb /></Scroll>
            <Bar>
              <AddCard><PlusIcon /><AddText>Add Card</AddText></AddCard>
              <Bubble><Mosaic rows={bubbleRows} pal={cream} w={12} h={12} heights={[5]} /></Bubble>
              <FootLinks>
                <FootLink>Explore</FootLink>
                <FootLink $r={19}>Help</FootLink>
                <FootLink $r={18}>Community</FootLink>
                <FootLink $r={19}>About</FootLink>
                <FootLink $r={20}>Support request</FootLink>
              </FootLinks>
            </Bar>
          </Page>
        </Win>
      </Desk>
    </>
  );
}
